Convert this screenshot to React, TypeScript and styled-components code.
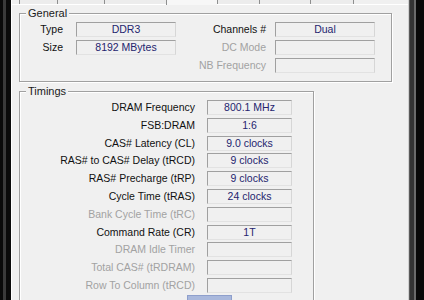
import * as React from 'react';
import styled, { createGlobalStyle } from 'styled-components';

const GlobalStyle = createGlobalStyle`
  html, body {
    margin: 0;
    padding: 0;
    background: #000;
  }
  body {
    font-family: "Liberation Sans", Arial, sans-serif;
    font-size: 10.5px;
  }
`;

const Window = styled.div`
  display: flex;
  width: 424px;
  height: 300px;
  overflow: hidden;
  background-color: #0a0a0a;
`;

const LeftFrame = styled.div`
  flex: none;
  box-sizing: border-box;
  width: 11px;
  height: 300px;
  background-color: #3a3a3a;
  border-left: 3px solid #0a0a0a;
  border-right: 5px solid #0a0a0a;
`;

const RightFrame = styled.div`
  flex: none;
  box-sizing: border-box;
  width: 15px;
  height: 300px;
  background-color: #080808;
  border-left: 1px solid #5a5a5a;
  box-shadow: inset 4px 0 0 #333, inset 6px 0 0 #6a6a6a;
`;

const Panel = styled.div`
  flex: none;
  box-sizing: border-box;
  width: 398px;
  height: 300px;
  display: flex;
  flex-direction: column;
  background: #f0f0f0;
  border-left: 1px solid #fff;
  border-right: 1px solid #d0d0d0;
`;

const TabStrip = styled.div`
  flex: none;
  display: flex;
  height: 4px;
  padding-left: 7px;
  border-bottom: 1px solid #fff;
`;

const Tab = styled.div<{ $width: number; $active?: boolean; $last?: boolean }>`
  box-sizing: border-box;
  width: ${(p) => p.$width}px;
  border-left: 1px solid #8e8f8f;
  border-right: ${(p) => (p.$last ? '1px solid #8e8f8f' : 'none')};
  background: ${(p) => (p.$active ? '#f7f7f7' : '#ececec')};
  margin-bottom: ${(p) => (p.$active ? '-1px' : '0')};
`;

const Content = styled.div`
  flex: none;
  padding: 8px 0 0 7px;
`;

const Group = styled.div<{ $width: number; $gap?: number }>`
  position: relative;
  box-sizing: border-box;
  width: ${(p) => p.$width}px;
  margin-top: ${(p) => p.$gap ?? 0}px;
  padding: 8px 0 8px 0;
  border: 1px solid #a0a0a0;
  box-shadow: 1px 1px 0 #fff, inset 1px 1px 0 #fff;
`;

const Legend = styled.span`
  position: absolute;
  top: -7px;
  left: 6px;
  padding: 0 2px;
  background: #f0f0f0;
  font-size: 11px;
  line-height: 13px;
  color: #1a1a1a;
`;

const GeneralGrid = styled.div`
  display: grid;
  grid-template-columns: 56px 100px 99px 100px;
  grid-auto-rows: 15px;
  row-gap: 3px;
`;

const TimingGrid = styled.div`
  display: grid;
  grid-template-columns: 187px 85px;
  grid-auto-rows: 15px;
  row-gap: 2.8px;
`;

const Label = styled.div<{ $pad: number; $disabled?: boolean }>`
  text-align: right;
  padding-right: ${(p) => p.$pad}px;
  line-height: 15px;
  white-space: nowrap;
  color: ${(p) => (p.$disabled ? '#a2a2a2' : '#111')};
`;

const ValueBox = styled.div`
  box-sizing: border-box;
  height: 15px;
  border-top: 1px solid #a0a0a0;
  border-left: 1px solid #a0a0a0;
  border-bottom: 1px solid #e2e2e2;
  border-right: 1px solid #d6d6d6;
  text-align: center;
  line-height: 13px;
  color: #24246e;
  white-space: nowrap;
`;

const Spacer = styled.div``;

const FocusButton = styled.div`
  box-sizing: border-box;
  width: 45px;
  height: 14px;
  margin: 2px 0 0 167px;
  background: #a9b8dc;
  border: 1px solid #8e9fcc;
`;

const tabs = [
  { name: 'CPU', width: 38 },
  { name: 'Caches', width: 47 },
  { name: 'Mainboard', width: 62 },
  { name: 'Memory', width: 51 },
  { name: 'SPD', width: 42 },
  { name: 'Graphics', width: 51 },
  { name: 'About', width: 44 },
];

const timings = [
  { label: 'DRAM Frequency', value: '800.1 MHz' },
  { label: 'FSB:DRAM', value: '1:6' },
  { label: 'CAS# Latency (CL)', value: '9.0 clocks' },
  { label: 'RAS# to CAS# Delay (tRCD)', value: '9 clocks' },
  { label: 'RAS# Precharge (tRP)', value: '9 clocks' },
  { label: 'Cycle Time (tRAS)', value: '24 clocks' },
  { label: 'Bank Cycle Time (tRC)', value: '' },
  { label: 'Command Rate (CR)', value: '1T' },
  { label: 'DRAM Idle Timer', value: '' },
  { label: 'Total CAS# (tRDRAM)', value: '' },
  { label: 'Row To Column (tRCD)', value: '' },
];

function App() {
  return (
    <>
      <GlobalStyle />
      <Window>
        <LeftFrame />
        <Panel>
          <TabStrip>
            {tabs.map((t, i) => (
              <Tab
                key={t.name}
                $width={t.width}
                $active={t.name === 'Memory'}
                $last={i === tabs.length - 1}
              />
            ))}
          </TabStrip>
          <Content>
            <Group $width={373}>
              <Legend>General</Legend>
              <GeneralGrid>
                <Label $pad={13}>Type</Label>
                <ValueBox>DDR3</ValueBox>
                <Label $pad={9}>Channels #</Label>
                <ValueBox>Dual</ValueBox>

                <Label $pad={13}>Size</Label>
                <ValueBox>8192 MBytes</ValueBox>
                <Label $pad={9} $disabled>
                  DC Mode
                </Label>
                <ValueBox />

                <Spacer />
                <Spacer />
                <Label $pad={9} $disabled>
                  NB Frequency
                </Label>
                <ValueBox />
              </GeneralGrid>
            </Group>

            <Group $width={295} $gap={9}>
              <Legend>Timings</Legend>
              <TimingGrid>
                {timings.map((t) => (
                  <React.Fragment key={t.label}>
                    <Label $pad={12} $disabled={!t.value}>
                      {t.label}
                    </Label>
                    <ValueBox>{t.value}</ValueBox>
                  </React.Fragment>
                ))}
              </TimingGrid>
              <FocusButton />
            </Group>
          </Content>
        </Panel>
        <RightFrame />
      </Window>
    </>
  );
}

export default App;
